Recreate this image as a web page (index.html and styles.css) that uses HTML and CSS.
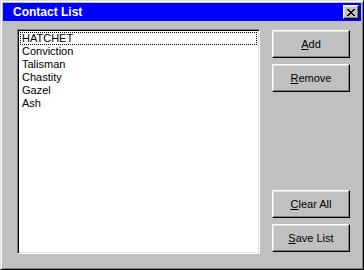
FILE: index.html
```html
<!DOCTYPE html>
<html lang="en">
<head>
    <meta charset="UTF-8">
    <title>Contact List</title>
    <link rel="stylesheet" href="styles.css">
</head>
<body>
    <div class="window">
        <div class="titlebar">
            <span class="title">Contact List</span>
            <button class="close-btn" aria-label="Close">
                <svg width="8" height="7" viewBox="0 0 8 7">
                    <path d="M0 0h2v1h1v1h2V1h1V0h2v1H7v1H6v1H5v1h1v1h1v1h1v1H6V6H5V5H3v1H2v1H0V6h1V5h1V4h1V3H2V2H1V1H0z" fill="#000"/>
                </svg>
            </button>
        </div>
        <div class="content">
            <ul class="listbox">
                <li class="item focused">HATCHET</li>
                <li class="item">Conviction</li>
                <li class="item">Talisman</li>
                <li class="item">Chastity</li>
                <li class="item">Gazel</li>
                <li class="item">Ash</li>
            </ul>
            <div class="buttons">
                <button class="btn"><u>A</u>dd</button>
                <button class="btn"><u>R</u>emove</button>
                <div class="spacer"></div>
                <button class="btn"><u>C</u>lear All</button>
                <button class="btn"><u>S</u>ave List</button>
            </div>
        </div>
    </div>
</body>
</html>
```
FILE: styles.css
```css
body {
    margin: 0;
    font-family: "Liberation Sans", Arial, sans-serif;
    font-size: 11px;
}
.window {
    width: 364px;
    height: 270px;
    box-sizing: border-box;
    background: #c0c0c0;
    border: 1px solid;
    border-color: #dfdfdf #000 #000 #dfdfdf;
    box-shadow: inset 1px 1px #fff, inset -1px -1px #808080;
    padding: 2px;
    display: flex;
    flex-direction: column;
}
.titlebar {
    height: 18px;
    background: #0000ff;
    display: flex;
    align-items: center;
    padding-left: 10px;
    padding-right: 2px;
}
.title {
    color: #fff;
    font-weight: bold;
    font-size: 12px;
    flex: 1;
}
.close-btn {
    width: 16px;
    height: 14px;
    padding: 0;
    background: #c0c0c0;
    border: 1px solid;
    border-color: #fff #000 #000 #fff;
    box-shadow: inset -1px -1px #808080, inset 1px 1px #dfdfdf;
    display: flex;
    align-items: center;
    justify-content: center;
}
.content {
    flex: 1;
    display: flex;
    padding: 8px 11px 13px 14px;
    gap: 12px;
}
.listbox {
    margin: 0;
    padding: 0;
    list-style: none;
    width: 243px;
    height: 225px;
    box-sizing: border-box;
    background: #fff;
    border: 1px solid;
    border-color: #808080 #fff #fff #808080;
    box-shadow: inset 1px 1px #000, inset -1px -1px #dfdfdf;
    padding: 2px;
}
.item {
    height: 13px;
    line-height: 13px;
    padding-left: 2px;
    color: #000;
}
.focused {
    outline: 1px dotted #000;
    outline-offset: -1px;
}
.buttons {
    width: 78px;
    display: flex;
    flex-direction: column;
    gap: 6px;
    padding: 1px 0 2px;
}
.spacer {
    flex: 1;
}
.btn {
    height: 28px;
    box-sizing: border-box;
    background: #c0c0c0;
    border: 1px solid;
    border-color: #fff #000 #000 #fff;
    box-shadow: inset -1px -1px #808080, inset 1px 1px #dfdfdf;
    font-family: "Liberation Sans", Arial, sans-serif;
    font-size: 11px;
    color: #000;
    padding: 0;
}
```
